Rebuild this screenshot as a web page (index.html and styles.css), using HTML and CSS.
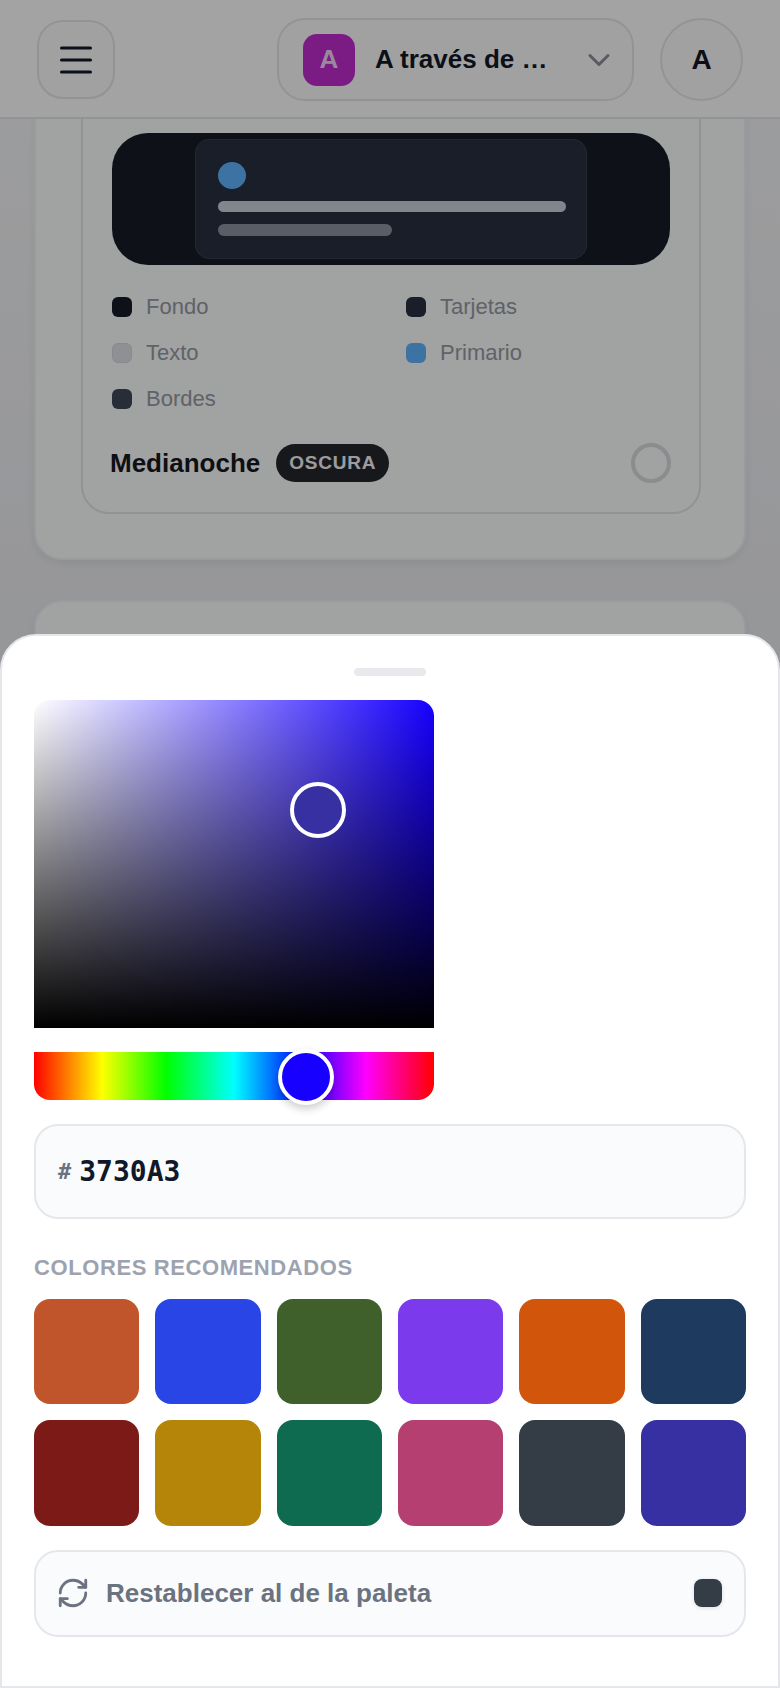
FILE: index.html
```html
<!DOCTYPE html>
<html lang="es">
<head>
<meta charset="utf-8">
<title>Selector de color</title>
<link rel="stylesheet" href="styles.css">
</head>
<body>
<div class="app">
  <header class="topbar">
    <button class="menu-btn" aria-label="Menú">
      <svg class="menu-icon" viewBox="0 0 32 28" fill="none" stroke="currentColor" stroke-width="3" stroke-linecap="round"><path d="M1.5 2h29M1.5 14h29M1.5 26h29"/></svg>
    </button>
    <div class="top-right">
      <button class="project">
        <span class="project-badge">A</span>
        <span class="project-name">A través de …</span>
        <svg class="chevron" viewBox="0 0 24 24" fill="none" stroke="currentColor" stroke-width="2" stroke-linecap="round" stroke-linejoin="round"><path d="m6 9 6 6 6-6"/></svg>
      </button>
      <button class="avatar">A</button>
    </div>
  </header>
  <main class="content">
    <section class="outer-card">
      <article class="theme-card">
        <div class="preview">
          <div class="preview-card">
            <span class="preview-dot"></span>
            <span class="preview-line line-long"></span>
            <span class="preview-line line-short"></span>
          </div>
        </div>
        <ul class="legend">
          <li class="legend-item"><span class="chip chip-bg"></span>Fondo</li>
          <li class="legend-item"><span class="chip chip-card"></span>Tarjetas</li>
          <li class="legend-item"><span class="chip chip-text"></span>Texto</li>
          <li class="legend-item"><span class="chip chip-primary"></span>Primario</li>
          <li class="legend-item"><span class="chip chip-border"></span>Bordes</li>
        </ul>
        <div class="theme-foot">
          <h3 class="theme-name">Medianoche</h3>
          <span class="theme-tag">OSCURA</span>
          <span class="radio"></span>
        </div>
      </article>
    </section>
    <section class="outer-card next-card"></section>
  </main>
  <div class="scrim"></div>
  <aside class="sheet">
    <div class="handle"></div>
    <div class="picker">
      <div class="sat">
        <span class="sat-thumb"></span>
      </div>
      <div class="hue">
        <span class="hue-thumb"></span>
      </div>
    </div>
    <div class="hex-field"><span class="hash">#</span><span class="hex-value">3730A3</span></div>
    <h4 class="section-label">COLORES RECOMENDADOS</h4>
    <div class="swatches">
      <span class="swatch s1"></span>
      <span class="swatch s2"></span>
      <span class="swatch s3"></span>
      <span class="swatch s4"></span>
      <span class="swatch s5"></span>
      <span class="swatch s6"></span>
      <span class="swatch s7"></span>
      <span class="swatch s8"></span>
      <span class="swatch s9"></span>
      <span class="swatch s10"></span>
      <span class="swatch s11"></span>
      <span class="swatch s12"></span>
    </div>
    <button class="reset">
      <svg class="reset-icon" viewBox="0 0 24 24" fill="none" stroke="currentColor" stroke-width="2" stroke-linecap="round" stroke-linejoin="round"><path d="M3 12a9 9 0 0 1 9-9 9.75 9.75 0 0 1 6.74 2.74L21 8"/><path d="M21 3v5h-5"/><path d="M21 12a9 9 0 0 1-9 9 9.75 9.75 0 0 1-6.74-2.74L3 16"/><path d="M8 16H3v5"/></svg>
      <span class="reset-label">Restablecer al de la paleta</span>
      <span class="reset-chip"></span>
    </button>
  </aside>
</div>
</body>
</html>
```

FILE: styles.css
```css
* { box-sizing: border-box; }
html, body { margin: 0; padding: 0; }
body { font-family: "Liberation Sans", Arial, sans-serif; background: #eceef1; }
button { font-family: inherit; padding: 0; cursor: pointer; }
ul { list-style: none; margin: 0; padding: 0; }
h3, h4 { margin: 0; }

.app {
  position: relative;
  width: 780px;
  height: 1688px;
  overflow: hidden;
  display: flex;
  flex-direction: column;
  background: linear-gradient(180deg, #f6f7f9 0, #eaebef 700px);
}

.topbar {
  position: relative;
  z-index: 1;
  flex: none;
  height: 119px;
  padding: 18px 37px 0;
  display: flex;
  justify-content: space-between;
  align-items: flex-start;
  background: #ffffff;
  border-bottom: 2px solid #e5e7eb;
}
.menu-btn {
  margin-top: 2px;
  width: 78px;
  height: 79px;
  border-radius: 26px;
  background: #fcfcfd;
  border: 2px solid #e5e7eb;
  color: #111827;
  display: flex;
  align-items: center;
  justify-content: center;
}
.menu-icon { width: 32px; height: 28px; display: block; }
.top-right { display: flex; gap: 26px; }
.project {
  width: 357px;
  height: 83px;
  border-radius: 28px;
  background: #fcfcfd;
  border: 2px solid #e5e7eb;
  padding-left: 24px;
  display: flex;
  align-items: center;
  gap: 20px;
}
.project-badge {
  flex: none;
  width: 52px;
  height: 52px;
  border-radius: 14px;
  background: #c02dcf;
  color: #f0d7f3;
  font-weight: 700;
  font-size: 26px;
  display: flex;
  align-items: center;
  justify-content: center;
}
.project-name {
  width: 186px;
  text-align: left;
  font-size: 26px;
  font-weight: 700;
  color: #111827;
  white-space: nowrap;
}
.chevron { width: 36px; height: 36px; color: #8b8f97; flex: none; }
.avatar {
  width: 83px;
  height: 83px;
  border-radius: 50%;
  background: #fcfcfd;
  border: 2px solid #e5e7eb;
  font-size: 28px;
  font-weight: 700;
  color: #111827;
}

.content {
  flex: 1;
  padding: 0 34px;
  display: flex;
  flex-direction: column;
  gap: 40px;
  overflow: hidden;
}
.outer-card {
  flex: none;
  margin-top: -60px;
  padding: 0 43px 44px 45px;
  height: 501px;
  display: flex;
  flex-direction: column;
  justify-content: flex-end;
  background: #fcfdfe;
  border: 2px solid #f1f2f4;
  border-radius: 28px;
  box-shadow: 0 4px 10px rgba(0, 0, 0, .06);
}
.next-card { margin-top: 0; height: 300px; }
.theme-card {
  height: 456px;
  padding: 0 29px 0 29px;
  border: 2px solid #e2e4e8;
  border-radius: 28px;
  display: flex;
  flex-direction: column;
  justify-content: flex-end;
}
.preview {
  height: 132px;
  border-radius: 36px;
  background: #181c26;
  display: flex;
  justify-content: center;
  align-items: center;
}
.preview-card {
  width: 392px;
  height: 120px;
  padding: 22px;
  border-radius: 14px;
  background: #293040;
  border: 1px solid #374051;
  display: flex;
  flex-direction: column;
  align-items: flex-start;
}
.preview-dot {
  width: 28px;
  height: 28px;
  border-radius: 50%;
  background: #5fb4ff;
}
.preview-line { display: block; height: 12px; border-radius: 6px; }
.line-long { width: 348px; margin-top: 12px; background: #ccd1dc; }
.line-short { width: 174px; margin-top: 12px; background: #8a92a0; }

.legend {
  margin-top: 19px;
  display: grid;
  grid-template-columns: 294px 1fr;
  grid-auto-rows: 46px;
}
.legend-item {
  display: flex;
  align-items: center;
  gap: 14px;
  font-size: 22px;
  color: #959aa3;
}
.chip { width: 20px; height: 20px; border-radius: 6px; flex: none; }
.chip-bg { background: #181c26; }
.chip-card { background: #293040; }
.chip-text { background: #dfe2e8; border: 1px solid #d5d8de; }
.chip-primary { background: #5fb4ff; }
.chip-border { background: #3f4857; }

.theme-foot {
  margin-top: 20px;
  margin-bottom: 28px;
  height: 42px;
  display: flex;
  align-items: center;
  margin-left: -2px;
}
.theme-name { font-size: 26px; font-weight: 700; color: #16181d; }
.theme-tag {
  margin-left: 16px;
  height: 38px;
  padding: 0 13px;
  border-radius: 19px;
  background: #24262b;
  color: #f4f5f7;
  font-size: 19px;
  font-weight: 700;
  letter-spacing: .8px;
  display: flex;
  align-items: center;
}
.radio {
  margin-left: auto;
  margin-right: -1px;
  width: 40px;
  height: 40px;
  border-radius: 50%;
  border: 4px solid #d9dbdf;
}

.scrim {
  position: absolute;
  inset: 0;
  z-index: 2;
  background: rgba(0, 0, 0, .36);
}
.sheet {
  position: absolute;
  z-index: 3;
  left: 0;
  right: 0;
  top: 634px;
  bottom: 0;
  padding: 0 32px;
  background: #ffffff;
  border: 2px solid #e5e7eb;
  border-radius: 36px 36px 0 0;
}
.handle {
  width: 72px;
  height: 8px;
  margin: 32px auto 0;
  border-radius: 4px;
  background: #e8e9ec;
}
.picker { position: relative; width: 400px; margin-top: 24px; }
.sat {
  position: relative;
  height: 328px;
  border-radius: 16px 16px 0 0;
  background:
    linear-gradient(0deg, #000, rgba(0, 0, 0, 0)),
    linear-gradient(90deg, #fff, rgba(255, 255, 255, 0)),
    #1700ff;
}
.sat-thumb {
  position: absolute;
  left: 256px;
  top: 82px;
  width: 56px;
  height: 56px;
  border-radius: 50%;
  border: 4px solid #fff;
  background: #3730a3;
}
.hue {
  position: relative;
  height: 48px;
  margin-top: 24px;
  border-radius: 0 0 16px 16px;
  background: linear-gradient(90deg, #f00 0%, #ff0 17%, #0f0 33%, #0ff 50%, #00f 67%, #f0f 83%, #f00 100%);
}
.hue-thumb {
  position: absolute;
  left: 244px;
  top: -3px;
  width: 56px;
  height: 56px;
  border-radius: 50%;
  border: 4px solid #fff;
  background: #1700ff;
  box-shadow: 0 4px 8px rgba(0, 0, 0, .2);
}
.hex-field {
  height: 95px;
  margin-top: 24px;
  padding-left: 22px;
  border: 2px solid #e5e7eb;
  border-radius: 24px;
  background: #fafbfd;
  display: flex;
  align-items: center;
  gap: 8px;
  font-family: "DejaVu Sans Mono", "Liberation Mono", monospace;
  font-weight: 700;
}
.hash { font-size: 22px; color: #6b7280; }
.hex-value { font-size: 28px; color: #111827; }
.section-label {
  margin-top: 36px;
  font-size: 22px;
  line-height: 26px;
  font-weight: 700;
  letter-spacing: .6px;
  color: #9ca3af;
}
.swatches {
  margin-top: 18px;
  display: grid;
  grid-template-columns: repeat(6, 1fr);
  gap: 16px;
}
.swatch { aspect-ratio: 1; border-radius: 16px; }
.s1 { background: #c0552b; }
.s2 { background: #2945e6; }
.s3 { background: #40602b; }
.s4 { background: #7c3aed; }
.s5 { background: #d1550a; }
.s6 { background: #1e3a5f; }
.s7 { background: #7c1a18; }
.s8 { background: #b48509; }
.s9 { background: #0e6b4f; }
.s10 { background: #b43f70; }
.s11 { background: #343d45; }
.s12 { background: #3730a3; }
.reset {
  width: 100%;
  height: 87px;
  margin-top: 24px;
  padding: 0 22px;
  border: 2px solid #e5e7eb;
  border-radius: 24px;
  background: #fafbfd;
  display: flex;
  align-items: center;
  gap: 16px;
  color: #6b7280;
}
.reset-icon { width: 34px; height: 34px; flex: none; margin-left: -2px; }
.reset-label { font-size: 26px; font-weight: 700; }
.reset-chip {
  margin-left: auto;
  width: 28px;
  height: 28px;
  border-radius: 8px;
  background: #343d45;
  box-shadow: 0 1px 4px rgba(0, 0, 0, .12);
}
```
